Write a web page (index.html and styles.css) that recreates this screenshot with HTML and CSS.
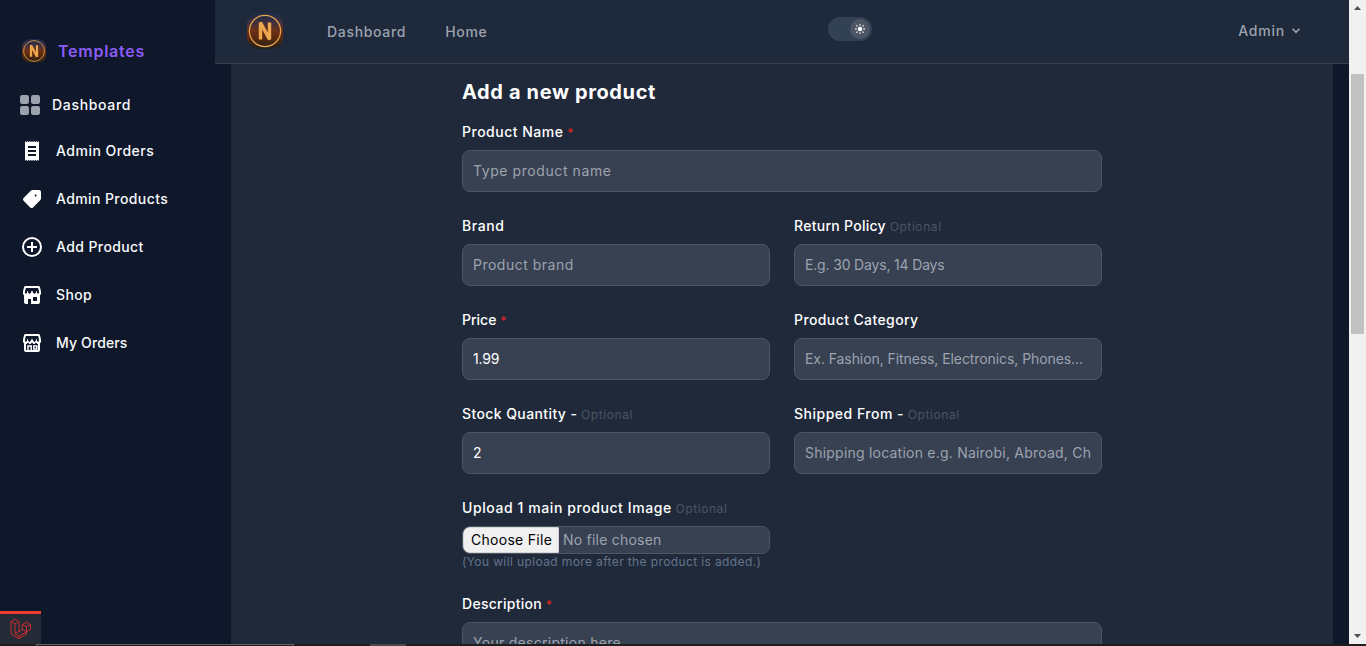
FILE: index.html
```html
<!DOCTYPE html>
<html lang="en">
<head>
<meta charset="utf-8">
<title>Add a new product</title>
<link rel="stylesheet" href="styles.css">
</head>
<body>
<div class="screen">
  <aside class="sidebar">
    <div class="brand">
      <svg width="24" height="24" viewBox="0 0 36 36"><use href="#logo"/></svg>
      <span>Templates</span>
    </div>
    <nav class="menu">
      <a class="item dash"><svg width="20" height="20" viewBox="0 0 20 20" fill="#9ca3af"><rect width="9" height="9" rx="2.2"/><rect x="11" width="9" height="9" rx="2.2"/><rect y="11" width="9" height="9" rx="2.2"/><rect x="11" y="11" width="9" height="9" rx="2.2"/></svg><span class="ls-7">Dashboard</span></a>
      <a class="item"><svg width="24" height="24" viewBox="0 0 24 24"><path fill="#fff" d="M5 2l1.17 1.2L7.33 2 8.5 3.2 9.67 2l1.16 1.2L12 2l1.17 1.2L14.33 2l1.17 1.2L16.67 2l1.16 1.2L19 2v20l-1.17-1.2L16.67 22l-1.17-1.2-1.17 1.2-1.16-1.2L12 22l-1.17-1.2L9.67 22 8.5 20.8 7.33 22l-1.16-1.2L5 22z"/><path stroke="#0f172a" stroke-width="2" d="M8 8h8M8 12h8M8 16h8"/></svg><span class="ls-5">Admin Orders</span></a>
      <a class="item"><svg width="24" height="24" viewBox="0 0 24 24"><path fill="#fff" d="M12.500 3H19a2 2 0 0 1 2 2v6.500a2 2 0 0 1-.6 1.400l-7.400 7.500a2 2 0 0 1-2.800 0l-6.600-6.600a2 2 0 0 1 0-2.800L11 3.600A2 2 0 0 1 12.500 3z"/><circle cx="15.600" cy="8.400" r="1" fill="#0f172a"/></svg><span class="ls-4">Admin Products</span></a>
      <a class="item"><svg width="24" height="24" viewBox="0 0 24 24" fill="none" stroke="#fff" stroke-width="2"><circle cx="12" cy="12" r="9"/><path d="M12 7v10M7 12h10"/></svg><span class="ls-4">Add Product</span></a>
      <a class="item"><svg width="24" height="24" viewBox="0 0 24 24"><use href="#awning"/><path fill="#fff" fill-rule="evenodd" d="M4 11h16v8a2 2 0 0 1-2 2h-7v-5H8v5H6a2 2 0 0 1-2-2zM13 14v4h4v-4z"/></svg><span class="ls-4">Shop</span></a>
      <a class="item"><svg width="24" height="24" viewBox="0 0 24 24"><use href="#awning"/><path fill="none" stroke="#fff" stroke-width="2" d="M5 11v8a1 1 0 0 0 1 1h12a1 1 0 0 0 1-1v-8"/><path fill="none" stroke="#fff" stroke-width="1.500" d="M8 20v-5h3.200v5M13.800 15h3v3h-3z"/></svg><span class="ls-1">My Orders</span></a>
    </nav>
    <div class="debugbar">
      <svg width="22" height="22" viewBox="0 0 22 22" fill="none" stroke="#d92d2a" stroke-width=".9"><path d="M1 3.500L5 1l4 2.500v10l3.500-2V6.500l4-2.500 4 2.500v5l-4 2.300V16L9 20.500 1 16zM1 3.500L5 6l4-2.500M5 6v9.500l4 2.500v2.500M9 18l7.500-4.200M5 15.500l4-2M12.500 6.500l4 2.300 4-2.300M16.500 8.800v5l-4-2.300"/></svg>
    </div>
  </aside>

  <div class="content">
    <header class="topbar">
      <svg class="logo" width="36" height="36" viewBox="0 0 36 36">
        <defs>
          <linearGradient id="sunset" x1="0" y1="0" x2="0" y2="1"><stop offset="0" stop-color="#1a2c4c"/><stop offset=".28" stop-color="#42303f"/><stop offset=".5" stop-color="#6d3015"/><stop offset=".72" stop-color="#54280f"/><stop offset="1" stop-color="#1b211f"/></linearGradient>
          <g id="logo"><rect width="36" height="36" rx="12" fill="url(#sunset)"/><circle cx="18" cy="18" r="15.600" fill="none" stroke="#e9a44a" stroke-width="1.200"/><path d="M13.500 26.500V9.500L22.500 26.500V9.500" fill="none" stroke="#eda84e" stroke-width="3.400" stroke-linejoin="bevel"/></g>
          <g id="awning"><path fill="#fff" d="M5.500 3h13a1.500 1.500 0 0 1 1.400 1L21 8.500V11l-1.500 2h-2L16 11.500 14.500 13h-1L12 11.500 10.500 13h-1L8 11.500 6.500 13h-2L3 11V8.500L4.100 4a1.500 1.500 0 0 1 1.400-1z"/><path fill="#0f172a" d="M5.800 5h12.400l1 4.500-1.200 1.500-1.200-1.500V8h-.8v1.500L14.500 11 13 9.500V8h-.5L12 9.500 11.500 8H11v1.500L9.500 11 8 9.500V8h-.8v1.500L6 11 4.800 9.500z"/></g>
        </defs>
        <use href="#logo"/>
      </svg>
      <nav class="links"><a class="ls-7">Dashboard</a><a class="ls-7">Home</a></nav>
      <div class="toggle"><div class="knob">
        <svg width="10" height="10" viewBox="0 0 10 10"><circle cx="5" cy="5" r="2.300" fill="#fff"/><path stroke="#fff" stroke-width="1.300" opacity=".8" d="M5 0v1.700M5 8.300V10M0 5h1.700M8.300 5H10M1.300 1.300l1.200 1.200M7.500 7.500l1.200 1.200M1.300 8.700l1.200-1.200M7.500 2.500l1.200-1.200"/></svg>
      </div></div>
      <div class="user"><span>Admin</span><svg width="8" height="6" viewBox="0 0 8 6" fill="none" stroke="#9ca3af" stroke-width="1.600"><path d="M.6.8L4 4.300 7.400.8"/></svg></div>
    </header>

    <main class="card">
      <form class="form">
        <h2>Add a new product</h2>
        <div class="grid">
          <div class="field wide"><label><span class="ls-5">Product Name</span> <i>*</i></label><div class="input"><span class="ls-6">Type product name</span></div></div>
          <div class="field"><label><span class="ls-6">Brand</span></label><div class="input"><span class="ls-5">Product brand</span></div></div>
          <div class="field"><label><span class="ls-3">Return Policy</span> <small>Optional</small></label><div class="input"><span class="ls-n2">E.g. 30 Days, 14 Days</span></div></div>
          <div class="field"><label><span>Price</span> <i>*</i></label><div class="input filled"><span class="ls-n2">1.99</span></div></div>
          <div class="field"><label><span class="ls-4">Product Category</span></label><div class="input"><span class="ls-n1">Ex. Fashion, Fitness, Electronics, Phones...</span></div></div>
          <div class="field"><label><span class="ls-4">Stock Quantity -</span> <small>Optional</small></label><div class="input filled"><span>2</span></div></div>
          <div class="field"><label><span class="ls-5">Shipped From -</span> <small>Optional</small></label><div class="input"><span class="clip ls-2">Shipping location e.g. Nairobi, Abroad, China</span></div></div>
          <div class="field"><label><span class="ls-6">Upload 1 main product Image</span> <small>Optional</small></label>
            <div class="file"><span class="choose ls-3">Choose File</span><span class="none ls-2">No file chosen</span></div>
            <p class="help">(You will upload more after the product is added.)</p></div>
          <div class="field wide"><label><span class="ls-3">Description</span> <i>*</i></label><div class="input area"><span class="ls-3">Your description here</span></div></div>
        </div>
      </form>
    </main>
  </div>

  <div class="scrollbar">
    <svg width="7" height="4" viewBox="0 0 7 4"><path fill="#505050" d="M3.500 0L7 4H0z"/></svg>
    <div class="track"><div class="thumb"></div></div>
    <svg width="7" height="4" viewBox="0 0 7 4"><path fill="#505050" d="M3.500 4L0 0h7z"/></svg>
  </div>
</div>
<div class="taskbar"><span class="window"></span><span class="tab"></span></div>
</body>
</html>
```

FILE: styles.css
```css
* { box-sizing: border-box; }
body { margin: 0; height: 646px; overflow: hidden; background: #0f172a; font: 14px/20px Inter, "Liberation Sans", sans-serif; }
svg { display: block; flex: none; }

.screen { display: flex; height: 644px; overflow: hidden; }

.sidebar { width: 215px; flex: none; display: flex; flex-direction: column; padding-top: 38px; color: #f8fafc; font-weight: 500; }
.brand { display: flex; align-items: center; gap: 12px; height: 25px; padding-left: 22px; color: #8b5cf6; font-size: 16px; font-weight: 600; letter-spacing: .75px; }
.menu { display: flex; flex-direction: column; padding: 32px 0 0 20px; }
.item { display: flex; align-items: center; gap: 12px; height: 24px; margin-bottom: 24px; }
.item.dash { height: 20px; }
.debugbar { display: flex; width: 41px; height: 33px; margin-top: auto; padding: 4px 0 0 10px; border-top: 3px solid #ef3b2d; background: #252a37; }

.content { flex: 1; display: flex; flex-direction: column; }
.topbar { display: flex; align-items: center; flex: none; height: 64px; padding: 0 49px 1px 32px; background: #1e293b; border-bottom: 1px solid #374151; color: #9ca3af; font-weight: 500; }
.links { display: flex; gap: 39px; width: 501px; margin-left: 44px; padding-top: 1px; }
.toggle { display: flex; justify-content: flex-end; align-items: center; width: 44px; height: 24px; margin-bottom: 4px; padding-right: 2px; border-radius: 12px; background: #334155; }
.knob { display: flex; align-items: center; justify-content: center; width: 20px; height: 20px; border-radius: 50%; background: #4b5563; }
.user { display: flex; align-items: center; gap: 7px; margin-left: auto; letter-spacing: .8px; }

.card { flex: 1; display: flex; justify-content: center; margin: 0 16px; padding-top: 14px; background: #1f293a; color: #fff; min-height: 0; overflow: hidden; }
.form { width: 640px; }
h2 { margin: 0 0 16px; font-size: 20px; line-height: 28px; font-weight: 700; letter-spacing: .63px; }
.grid { display: grid; grid-template-columns: 308px 308px; gap: 24px; }
.wide { grid-column: span 2; }
label { display: block; height: 20px; margin-bottom: 8px; font-weight: 500; white-space: nowrap; }
label i { color: #dc2626; font-style: normal; font-size: 12px; }
small { color: #4b5563; font-size: 12px; font-weight: 400; letter-spacing: .58px; }
.input { display: flex; align-items: center; height: 42px; padding: 0 10px; border: 1px solid #4b5563; border-radius: 8px; background: #384151; color: #9ca3af; }
.filled { color: #fff; }
.clip { overflow: hidden; white-space: nowrap; }
.area { height: 80px; align-items: flex-start; padding-top: 10px; }
.file { display: flex; align-items: center; height: 28px; border: 1px solid #4b5563; border-radius: 8px; background: #384151; color: #9ca3af; overflow: hidden; }
.choose { height: 26px; width: 96px; padding: 2px 7px; border: 1px solid #d6d6d6; border-radius: 6px 1px 1px 6px; background: #f0f0f0; color: #000; white-space: nowrap; }
.none { margin-left: 4px; }
.help { margin: 0; font-size: 12px; line-height: 16px; letter-spacing: .38px; color: #64748b; }

.ls-n2 { letter-spacing: -.17px; }
.ls-n1 { letter-spacing: -.08px; }
.ls-1 { letter-spacing: .13px; }
.ls-2 { letter-spacing: .22px; }
.ls-3 { letter-spacing: .28px; }
.ls-4 { letter-spacing: .4px; }
.ls-5 { letter-spacing: .5px; }
.ls-6 { letter-spacing: .58px; }
.ls-7 { letter-spacing: .68px; }

.scrollbar { display: flex; flex-direction: column; align-items: center; flex: none; width: 17px; padding: 6px 0; background: #f1f1f1; }
.track { flex: 1; width: 13px; padding-top: 64px; }
.thumb { height: 260px; background: #c1c1c1; }

.taskbar { display: flex; gap: 76px; height: 2px; padding-left: 36px; background: #1e1e1e; }
.window { width: 258px; border: solid #636363; border-width: 1px 1px 0; }
.tab { width: 36px; background: #484848; }
```
